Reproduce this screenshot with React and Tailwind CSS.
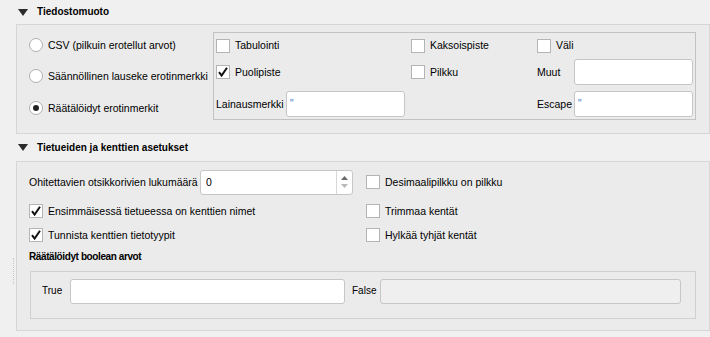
import React from 'react';

function Arrow() {
  return (
    <svg width="10" height="7" viewBox="0 0 10 7" className="shrink-0">
      <path d="M0 0 L10 0 L5 7 Z" fill="#2b2b2b" />
    </svg>
  );
}

function Check({ checked }) {
  return (
    <span className="relative w-[14px] h-[14px] shrink-0 border border-[#b4b4b4] bg-white">
      {checked && (
        <svg width="14" height="14" viewBox="0 0 14 14" className="absolute -left-px -top-px">
          <path d="M3 7.2 L5.6 10.6 L11 2.8" fill="none" stroke="#111" strokeWidth="2" />
        </svg>
      )}
    </span>
  );
}

function CheckRow({ checked, label, className = '' }) {
  return (
    <div className={`flex items-center gap-[5px] whitespace-nowrap ${className}`}>
      <Check checked={checked} />
      <span>{label}</span>
    </div>
  );
}

function Radio({ checked, label }) {
  return (
    <div className="flex items-center gap-[5px] h-[24px] whitespace-nowrap">
      <span className="flex items-center justify-center w-[14px] h-[14px] shrink-0 rounded-full border border-[#b0b0b0] bg-white">
        {checked && <span className="w-[6px] h-[6px] rounded-full bg-[#222]" />}
      </span>
      <span>{label}</span>
    </div>
  );
}

function TextInput({ value, className = '', disabled }) {
  return (
    <div
      className={`h-[26px] shrink-0 rounded-[3px] border border-[#c6c6c6] flex items-center px-[3px] ${
        disabled ? 'bg-[#efefef]' : 'bg-white'
      } ${className}`}
    >
      {value && <span className="text-[#2f7fd6] text-[10px] leading-none">{value}</span>}
    </div>
  );
}

function SectionHeader({ title, className = '' }) {
  return (
    <div className={`flex items-center pl-[18px] gap-[9px] font-bold text-[10px] whitespace-nowrap ${className}`}>
      <Arrow />
      <span>{title}</span>
    </div>
  );
}

export default function App() {
  return (
    <div
      className="relative w-[710px] h-[337px] overflow-hidden bg-[#f0f0f0] text-[10.5px] text-black leading-none"
      style={{ fontFamily: '"Liberation Sans", Arial, sans-serif' }}
    >
      {/* Tiedostomuoto */}
      <SectionHeader title="Tiedostomuoto" className="h-[24px]" />
      <div className="ml-[16px] w-[694px] h-[110px] border border-[#d6d6d6] bg-[#ebebeb] flex">
        <div className="w-[196px] pl-[12px] pt-[8px] flex flex-col">
          <Radio label="CSV (pilkuin erotellut arvot)" />
          <div className="mt-[7px]">
            <Radio label="Säännöllinen lauseke erotinmerkki" />
          </div>
          <div className="mt-[8px]">
            <Radio checked label="Räätälöidyt erotinmerkit" />
          </div>
        </div>
        <div className="mt-[7px] w-[483px] h-[88px] border border-[#c2c2c2] flex flex-col">
          <div className="flex h-[25px] items-center pl-[2px]">
            <CheckRow label="Tabulointi" className="w-[195px]" />
            <CheckRow label="Kaksoispiste" className="w-[126px]" />
            <CheckRow label="Väli" />
          </div>
          <div className="flex h-[28px] items-center pl-[2px]">
            <CheckRow checked label="Puolipiste" className="w-[195px]" />
            <CheckRow label="Pilkku" className="w-[126px]" />
            <div className="flex items-center">
              <span className="w-[37px]">Muut</span>
              <TextInput className="w-[119px]" />
            </div>
          </div>
          <div className="flex h-[28px] mt-[4px] items-center pl-[2px]">
            <div className="flex items-center w-[321px]">
              <span className="w-[70px] whitespace-nowrap">Lainausmerkki</span>
              <TextInput value={'"'} className="w-[119px]" />
            </div>
            <div className="flex items-center">
              <span className="w-[37px]">Escape</span>
              <TextInput value={'"'} className="w-[119px]" />
            </div>
          </div>
        </div>
      </div>

      {/* Tietueiden ja kenttien asetukset */}
      <SectionHeader title="Tietueiden ja kenttien asetukset" className="h-[27px]" />
      <div className="ml-[16px] w-[694px] h-[170px] border border-[#d6d6d6] bg-[#ebebeb] flex flex-col">
        <div className="flex h-[24px] items-center mt-[8px] pl-[12px]">
          <div className="flex items-center w-[337px]">
            <span className="w-[171px] whitespace-nowrap">Ohitettavien otsikkorivien lukumäärä</span>
            <div className="w-[153px] h-[25px] rounded-[3px] border border-[#c6c6c6] bg-white flex">
              <span className="flex-1 flex items-center pl-[5px]">0</span>
              <div className="w-[16px] border-l border-[#d8d8d8] flex flex-col items-center justify-center gap-[4px]">
                <svg width="7" height="4" viewBox="0 0 7 4">
                  <path d="M0 4 L3.5 0 L7 4 Z" fill="#6a6a6a" />
                </svg>
                <svg width="7" height="4" viewBox="0 0 7 4">
                  <path d="M0 0 L7 0 L3.5 4 Z" fill="#b8b8b8" />
                </svg>
              </div>
            </div>
          </div>
          <CheckRow label="Desimaalipilkku on pilkku" />
        </div>
        <div className="flex h-[24px] items-center mt-[5px] pl-[12px]">
          <CheckRow checked label="Ensimmäisessä tietueessa on kenttien nimet" className="w-[337px]" />
          <CheckRow label="Trimmaa kentät" />
        </div>
        <div className="flex h-[24px] items-center pl-[12px]">
          <CheckRow checked label="Tunnista kenttien tietotyypit" className="w-[337px]" />
          <CheckRow label="Hylkää tyhjät kentät" />
        </div>
        <div className="h-[20px] flex items-center pl-[12px] font-bold text-[10px] tracking-[-0.4px] whitespace-nowrap">
          Räätälöidyt boolean arvot
        </div>
        <div className="mt-[4px] mx-[13px] h-[48px] border border-[#d0d0d0] flex items-start pt-[7px] pl-[11px] text-[10px]">
          <span className="w-[28px] h-[24px] flex items-center">True</span>
          <TextInput className="w-[275px] !h-[25px]" />
          <span className="ml-[7px] w-[28px] h-[24px] flex items-center">False</span>
          <TextInput disabled className="w-[301px] !h-[25px]" />
        </div>
      </div>

      {/* splitter handle */}
      <div className="absolute left-[13px] top-[258px] h-[26px] border-l border-dotted border-[#c4c4c4]" />
    </div>
  );
}
